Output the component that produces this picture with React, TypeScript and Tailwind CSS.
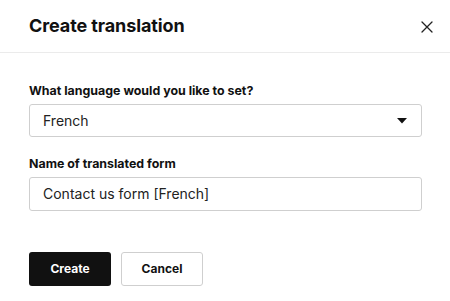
import React from "react";

export default function App() {
  const font = { fontFamily: "Inter, 'Noto Sans', sans-serif" };
  return (
    <div className="w-[450px] h-[301px] bg-white text-[#111]" style={font}>
      <div className="h-[53px] flex items-center justify-between pl-[29px] pr-[17px] border-b border-[#ebebeb]">
        <div className="text-[18px] font-bold leading-[22px] tracking-[-0.1px] text-[#111]">Create translation</div>
        <svg width="12" height="12" viewBox="0 0 12 12" className="mt-[1px]">
          <path d="M1 1L11 11M11 1L1 11" stroke="#222" strokeWidth="1.3" strokeLinecap="round" />
        </svg>
      </div>
      <div className="pl-[29px] pr-[28px] pt-[30px]">
        <div className="text-[12.4px] font-bold leading-[16px] text-[#111] mb-[5px]">What language would you like to set?</div>
        <div className="h-[33px] border border-[#cfcfcf] rounded-[3px] flex items-center justify-between pl-[13px] pr-[14px]">
          <span className="text-[14px] leading-[18px] text-[#222]">French</span>
          <svg width="10" height="6" viewBox="0 0 10 6">
            <path d="M0 0H10L5 5.5Z" fill="#111" />
          </svg>
        </div>
        <div className="text-[12.4px] font-bold leading-[16px] text-[#111] mt-[19px] mb-[5px]">Name of translated form</div>
        <div className="h-[34px] border border-[#cfcfcf] rounded-[3px] flex items-center pl-[13px]">
          <span className="text-[14px] leading-[18px] text-[#222]">Contact us form [French]</span>
        </div>
        <div className="flex gap-[10px] mt-[41px]">
          <button className="w-[82px] h-[34px] bg-[#111] rounded-[3px] text-white text-[12px] font-bold">Create</button>
          <button className="w-[82px] h-[34px] bg-white border border-[#cfcfcf] rounded-[3px] text-[#111] text-[12px] font-bold">Cancel</button>
        </div>
      </div>
    </div>
  );
}
